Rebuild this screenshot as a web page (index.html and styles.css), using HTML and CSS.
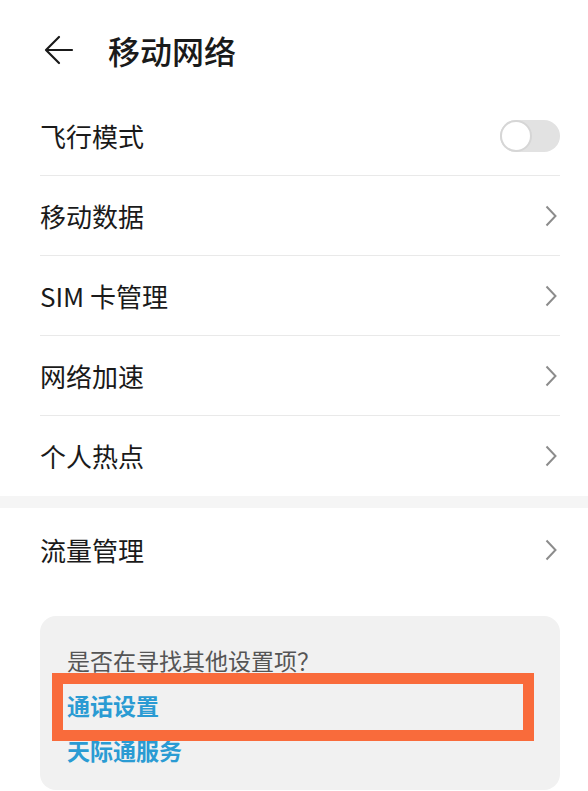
FILE: index.html
```html
<!DOCTYPE html>
<html lang="zh-CN">
<head>
<meta charset="utf-8">
<title>移动网络</title>
<link rel="stylesheet" href="styles.css">
</head>
<body>
<header class="header">
  <svg class="back" width="30" height="30" viewBox="0 0 30 30"><path d="M28 15H3M15 2L2 15l13 13" fill="none" stroke="#1a1a1a" stroke-width="2.2" stroke-linecap="round" stroke-linejoin="round"/></svg>
  <h1 class="title">移动网络</h1>
</header>
<section class="list">
  <div class="row"><span class="label">飞行模式</span><span class="toggle"><span class="knob"></span></span></div>
  <div class="row"><span class="label">移动数据</span><svg class="chev" width="12" height="22" viewBox="0 0 12 22"><path d="M1.5 1.5L10.5 11l-9 9.5" fill="none" stroke="#8c8c8c" stroke-width="2"/></svg></div>
  <div class="row"><span class="label">SIM 卡管理</span><svg class="chev" width="12" height="22" viewBox="0 0 12 22"><path d="M1.5 1.5L10.5 11l-9 9.5" fill="none" stroke="#8c8c8c" stroke-width="2"/></svg></div>
  <div class="row"><span class="label">网络加速</span><svg class="chev" width="12" height="22" viewBox="0 0 12 22"><path d="M1.5 1.5L10.5 11l-9 9.5" fill="none" stroke="#8c8c8c" stroke-width="2"/></svg></div>
  <div class="row last"><span class="label">个人热点</span><svg class="chev" width="12" height="22" viewBox="0 0 12 22"><path d="M1.5 1.5L10.5 11l-9 9.5" fill="none" stroke="#8c8c8c" stroke-width="2"/></svg></div>
</section>
<div class="band"></div>
<section class="list">
  <div class="row tall last"><span class="label">流量管理</span><svg class="chev" width="12" height="22" viewBox="0 0 12 22"><path d="M1.5 1.5L10.5 11l-9 9.5" fill="none" stroke="#8c8c8c" stroke-width="2"/></svg></div>
</section>
<section class="card">
  <p class="hint">是否在寻找其他设置项？</p>
  <p class="link">通话设置</p>
  <p class="link">天际通服务</p>
  <div class="highlight"></div>
</section>
</body>
</html>
```
FILE: styles.css
```css
html, body {
  margin: 0;
  padding: 0;
  background: #ffffff;
  font-family: "Noto Sans CJK SC", "Noto Sans", sans-serif;
  color: #1a1a1a;
}
.header {
  height: 96px;
  display: flex;
  align-items: center;
  padding: 4px 0 0 44px;
  box-sizing: border-box;
}
.back {
  flex: none;
}
.title {
  margin: 0 0 0 34px;
  font-size: 32px;
  font-weight: 500;
  line-height: 1;
}
.list {
  margin: 0 28px 0 40px;
}
.row {
  height: 80px;
  display: flex;
  align-items: center;
  justify-content: space-between;
  border-bottom: 1px solid #e9e9e9;
  box-sizing: border-box;
}
.row.last {
  border-bottom: none;
}
.row.tall {
  height: 84px;
}
.label {
  font-size: 26px;
  line-height: 1;
}
.chev {
  margin-right: 3px;
}
.toggle {
  width: 60px;
  height: 32px;
  border-radius: 16px;
  background: #e2e2e2;
  display: flex;
  align-items: center;
  box-sizing: border-box;
}
.knob {
  width: 32px;
  height: 32px;
  border-radius: 50%;
  background: #ffffff;
  border: 2px solid #d6d6d6;
  box-sizing: border-box;
}
.band {
  height: 12px;
  background: #f5f5f5;
}
.card {
  position: relative;
  margin: 24px 28px 0 40px;
  background: #f1f1f1;
  border-radius: 16px;
  padding: 22px 20px 17px 27px;
}
.card p {
  margin: 0;
  line-height: 45px;
  font-size: 23px;
}
.hint {
  color: #555555;
}
.link {
  color: #2a9bd3;
  font-weight: 700;
}
.highlight {
  position: absolute;
  left: 12px;
  top: 57px;
  width: 482px;
  height: 68px;
  border: 11px solid #f96b3b;
  box-sizing: border-box;
}
```
